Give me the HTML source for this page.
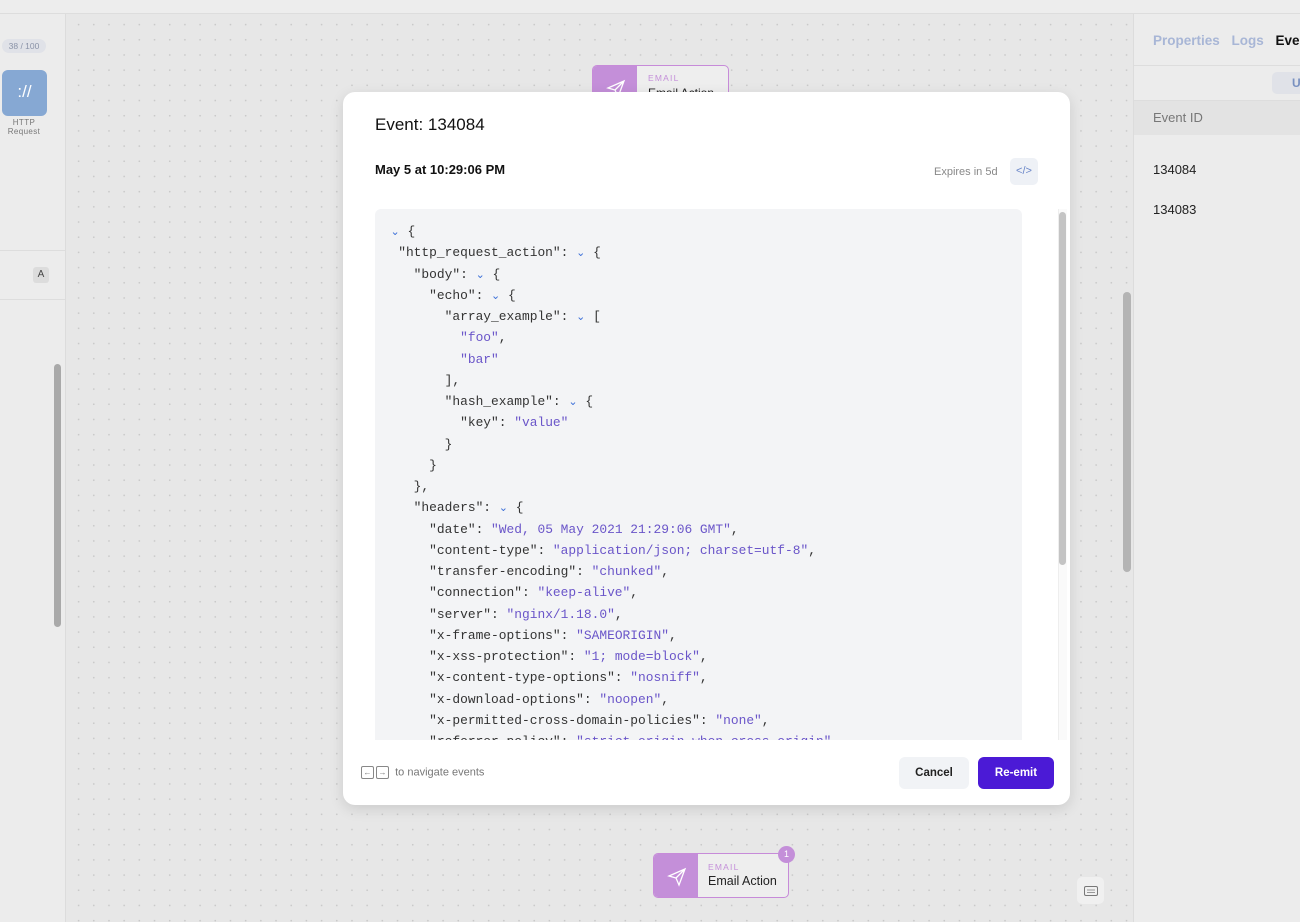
<!DOCTYPE html>
<html><head><meta charset="utf-8"><style>
*{box-sizing:border-box;margin:0;padding:0}
body{width:1300px;height:922px;overflow:hidden;font-family:"Liberation Sans",sans-serif;background:#e6e6e6;position:relative}
.top{position:absolute;left:0;top:0;width:1300px;height:14px;background:#ededed;border-bottom:1px solid #ddd}
.canvas{position:absolute;left:66px;top:14px;width:1067px;height:908px;background-color:#e7e7e7;background-image:radial-gradient(#c9c9c9 0.8px,transparent 1px);background-size:15.2px 15.2px;background-position:5px 3px}
.left{position:absolute;left:0;top:14px;width:66px;height:908px;background:#ececec;border-right:1px solid #dcdcdc}
.right{position:absolute;left:1133px;top:14px;width:167px;height:908px;background:#ececec;border-left:1px solid #dcdcdc}
.modal{position:absolute;left:343px;top:92px;width:727px;height:713px;background:#fff;border-radius:12px;box-shadow:0 4px 14px rgba(0,0,0,.12)}
.code{position:absolute;left:32px;top:117px;width:647px;height:531px;background:#f3f4f6;border-radius:6px 6px 0 0;overflow:hidden;font-family:"Liberation Mono",monospace;font-size:12.9px;color:#333;padding-top:12px}
.code div{height:21.26px;line-height:21.26px;white-space:pre}
.s{color:#6a55c9}
.c{color:#3b6fd8;font-size:11px}
.node{position:absolute;height:45px;border:1px solid #c78bd9;border-radius:5px;background:#eee;overflow:hidden}
.node .ic{position:absolute;left:0;top:0;width:44px;height:100%;background:#c48fd9}
</style></head><body>
<div class="top"></div>
<div class="canvas"></div>
<div class="left">
 <div style="position:absolute;left:2px;top:25px;width:44px;height:14px;border-radius:7px;background:#e0e2e8;font-size:8.5px;color:#8a93a8;text-align:center;line-height:14px">38 / 100</div>
 <div style="position:absolute;left:2px;top:56px;width:45px;height:46px;border-radius:6px;background:#86a8d3;color:#fff;font-size:17px;text-align:center;line-height:44px">://</div>
 <div style="position:absolute;left:0;top:104px;width:48px;font-size:8px;color:#777;text-align:center;line-height:9px;letter-spacing:.4px">HTTP<br>Request</div>
 <div style="position:absolute;left:0;top:236px;width:65px;border-top:1px solid #ddd"></div>
 <div style="position:absolute;left:33px;top:253px;width:16px;height:16px;border-radius:3px;background:#dcdcdc;font-size:10px;text-align:center;line-height:16px;color:#444">A</div>
 <div style="position:absolute;left:0;top:285px;width:65px;border-top:1px solid #ddd"></div>
 <div style="position:absolute;left:54px;top:350px;width:7px;height:263px;border-radius:4px;background:#a9a9a9"></div>
</div>
<div class="right">
 <div style="position:absolute;left:19px;top:19px;font-size:13.5px;font-weight:bold;color:#a8b6d6;white-space:nowrap;word-spacing:8px">Properties Logs <span style="color:#111">Eve</span></div>
 <div style="position:absolute;left:0;top:51px;width:167px;border-top:1px solid #ddd"></div>
 <div style="position:absolute;left:138px;top:58px;width:40px;height:22px;border-radius:5px;background:#e0e2e8;font-size:12px;font-weight:bold;color:#7890c0;padding-left:20px;line-height:22px">U</div>
 <div style="position:absolute;left:0;top:86px;width:167px;height:35px;background:#e3e3e3;border-top:1px solid #ddd;font-size:13px;color:#777;padding-left:19px;line-height:33px">Event ID</div>
 <div style="position:absolute;left:19px;top:148px;font-size:13px;color:#222">134084</div>
 <div style="position:absolute;left:19px;top:188px;font-size:13px;color:#222">134083</div>
</div>
<div style="position:absolute;left:1123px;top:292px;width:8px;height:280px;border-radius:4px;background:#b4b4b4"></div>
<div class="node" style="left:592px;top:65px;width:137px">
 <div class="ic"><svg width="44" height="45" viewBox="0 0 44 45"><path d="M15 22 L31 15 L25 31 L22 24 Z M22 24 L31 15" fill="none" stroke="#fff" stroke-width="1.3"/></svg></div>
 <div style="position:absolute;left:55px;top:7px;font-size:8.5px;letter-spacing:1.2px;color:#c48fd9">EMAIL</div>
 <div style="position:absolute;left:55px;top:20px;font-size:12px;color:#222">Email Action</div>
</div>
<div class="node" style="left:653px;top:853px;width:136px">
 <div class="ic"><svg width="44" height="45" viewBox="0 0 44 45"><path d="M15 22 L31 15 L25 31 L22 24 Z M22 24 L31 15" fill="none" stroke="#fff" stroke-width="1.3"/></svg></div>
 <div style="position:absolute;left:54px;top:8px;font-size:8.5px;letter-spacing:1.2px;color:#c48fd9">EMAIL</div>
 <div style="position:absolute;left:54px;top:20px;font-size:12.5px;color:#222">Email Action</div>
</div>
<div style="position:absolute;left:778px;top:846px;width:17px;height:17px;border-radius:50%;background:#c48fd9;color:#fff;font-size:9px;text-align:center;line-height:17px">1</div>
<div style="position:absolute;left:1077px;top:877px;width:27px;height:27px;border-radius:5px;background:#f0f0f0;text-align:center"><svg width="14" height="10" style="margin-top:9px" viewBox="0 0 14 10"><rect x=".5" y=".5" width="13" height="9" rx="1.5" fill="none" stroke="#777"/><path d="M3 4h8M3 6.5h8" stroke="#999"/></svg></div>

<div class="modal">
 <div style="position:absolute;left:32px;top:23px;font-size:17px;color:#111">Event: 134084</div>
 <div style="position:absolute;left:32px;top:70px;font-size:13px;font-weight:bold;color:#111">May 5 at 10:29:06 PM</div>
 <div style="position:absolute;left:591px;top:74px;font-size:11px;color:#888">Expires in 5d</div>
 <div style="position:absolute;left:667px;top:66px;width:28px;height:27px;border-radius:5px;background:#eef1f6;color:#6a86c8;font-size:11px;text-align:center;line-height:27px">&lt;/&gt;</div>
 <div class="code">
<div>  <span class="c">⌄</span> {</div>
<div>   "http_request_action": <span class="c">⌄</span> {</div>
<div>     "body": <span class="c">⌄</span> {</div>
<div>       "echo": <span class="c">⌄</span> {</div>
<div>         "array_example": <span class="c">⌄</span> [</div>
<div>           <span class="s">"foo"</span>,</div>
<div>           <span class="s">"bar"</span></div>
<div>         ],</div>
<div>         "hash_example": <span class="c">⌄</span> {</div>
<div>           "key": <span class="s">"value"</span></div>
<div>         }</div>
<div>       }</div>
<div>     },</div>
<div>     "headers": <span class="c">⌄</span> {</div>
<div>       "date": <span class="s">"Wed, 05 May 2021 21:29:06 GMT"</span>,</div>
<div>       "content-type": <span class="s">"application/json; charset=utf-8"</span>,</div>
<div>       "transfer-encoding": <span class="s">"chunked"</span>,</div>
<div>       "connection": <span class="s">"keep-alive"</span>,</div>
<div>       "server": <span class="s">"nginx/1.18.0"</span>,</div>
<div>       "x-frame-options": <span class="s">"SAMEORIGIN"</span>,</div>
<div>       "x-xss-protection": <span class="s">"1; mode=block"</span>,</div>
<div>       "x-content-type-options": <span class="s">"nosniff"</span>,</div>
<div>       "x-download-options": <span class="s">"noopen"</span>,</div>
<div>       "x-permitted-cross-domain-policies": <span class="s">"none"</span>,</div>
<div>       "referrer-policy": <span class="s">"strict-origin-when-cross-origin"</span>,</div>
 </div>
 <div style="position:absolute;left:715px;top:117px;width:9px;height:531px;background:#fafafa;border-left:1px solid #eee"></div>
 <div style="position:absolute;left:716px;top:120px;width:7px;height:353px;border-radius:4px;background:#c4c4c4"></div>
 <div style="position:absolute;left:18px;top:674px;font-size:11px;color:#777;white-space:nowrap"><span style="display:inline-block;width:13px;height:13px;border:1px solid #888;border-radius:2px;font-size:8px;text-align:center;line-height:11px;vertical-align:middle">←</span><span style="display:inline-block;width:13px;height:13px;border:1px solid #888;border-radius:2px;font-size:8px;text-align:center;line-height:11px;vertical-align:middle;margin-left:2px">→</span>&nbsp;&nbsp;to navigate events</div>
 <div style="position:absolute;left:556px;top:665px;width:70px;height:32px;border-radius:6px;background:#f1f3f6;font-size:11.5px;font-weight:bold;color:#222;text-align:center;line-height:32px">Cancel</div>
 <div style="position:absolute;left:635px;top:665px;width:76px;height:32px;border-radius:6px;background:#4b1ad6;font-size:11.5px;font-weight:bold;color:#fff;text-align:center;line-height:32px">Re-emit</div>
</div>
</body></html>
